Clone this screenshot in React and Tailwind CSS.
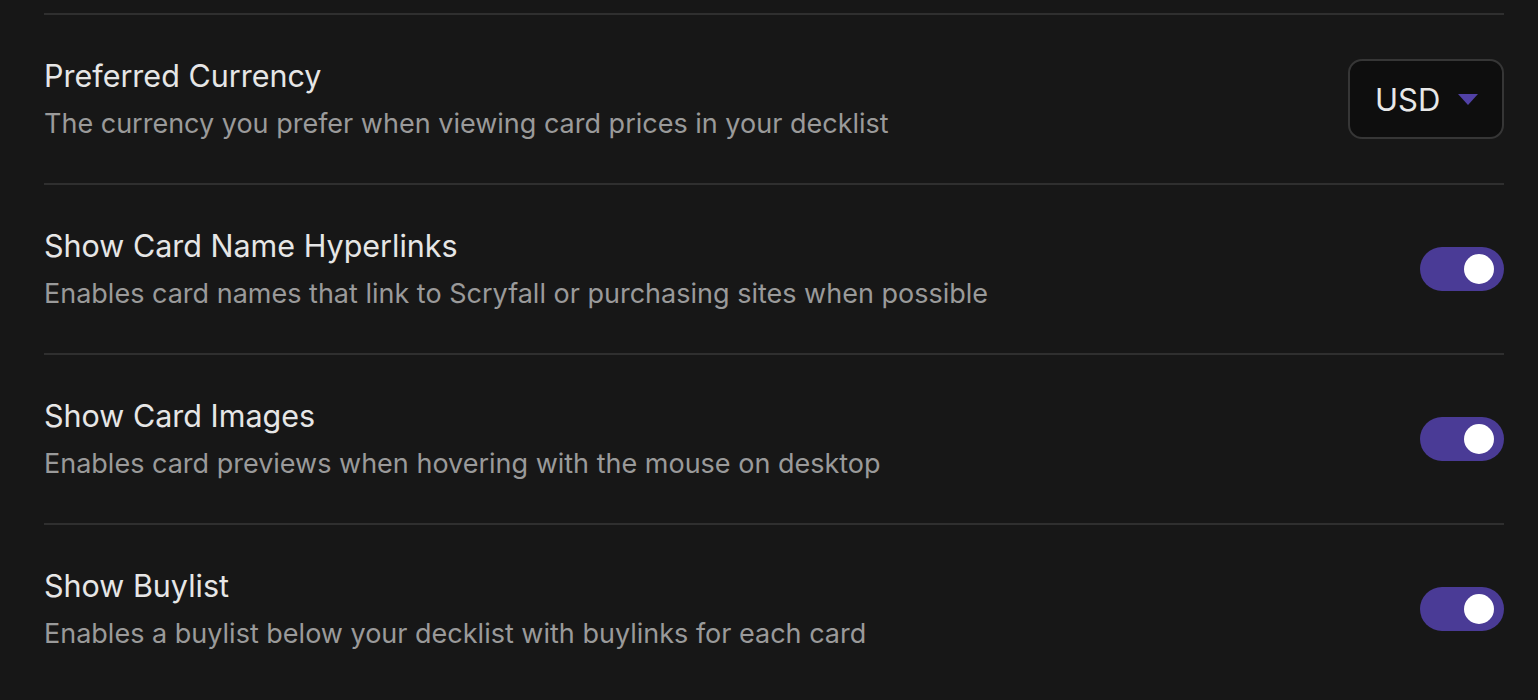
import React, { useState } from 'react';

const rows = [
  {
    key: 'currency',
    title: 'Preferred Currency',
    description: 'The currency you prefer when viewing card prices in your decklist',
    type: 'select',
  },
  {
    key: 'hyperlinks',
    title: 'Show Card Name Hyperlinks',
    description: 'Enables card names that link to Scryfall or purchasing sites when possible',
    type: 'toggle',
  },
  {
    key: 'images',
    title: 'Show Card Images',
    description: 'Enables card previews when hovering with the mouse on desktop',
    type: 'toggle',
  },
  {
    key: 'buylist',
    title: 'Show Buylist',
    description: 'Enables a buylist below your decklist with buylinks for each card',
    type: 'toggle',
  },
];

function Toggle({ on, onChange }) {
  return (
    <button
      onClick={() => onChange(!on)}
      className={`w-[84px] h-[44px] rounded-full flex items-center px-[10px] transition-colors ${
        on ? 'bg-[#4a3b96] justify-end' : 'bg-[#3a3a3a] justify-start'
      }`}
    >
      <span className="w-[30px] h-[30px] rounded-full bg-white block" />
    </button>
  );
}

function CurrencySelect() {
  return (
    <div className="w-[156px] h-[80px] rounded-[14px] border-2 border-[#363636] bg-[#0e0e0e] flex items-center pl-[25px] gap-[18px]">
      <span className="text-[31px] text-[#e8e8e8] leading-none">USD</span>
      <svg width="20" height="11" viewBox="0 0 20 11">
        <polygon points="0,0 20,0 10,11" fill="#5141a6" />
      </svg>
    </div>
  );
}

export default function App() {
  const [toggles, setToggles] = useState({ hyperlinks: true, images: true, buylist: true });

  return (
    <div
      className="min-h-screen bg-[#171717] pt-[13px] pl-[44px] pr-[34px]"
      style={{ fontFamily: 'Inter, "Noto Sans", sans-serif' }}
    >
      {rows.map((row) => (
        <div key={row.key} className="border-t-2 border-[#2f2f2f] h-[170px] flex items-center justify-between">
          <div className="flex flex-col">
            <h3 className="text-[30.5px] leading-[40px] text-[#e6e6e6] font-normal">{row.title}</h3>
            <p className="mt-[10px] text-[27px] leading-[36px] text-[#9a9a9a]">{row.description}</p>
          </div>
          {row.type === 'select' ? (
            <CurrencySelect />
          ) : (
            <Toggle
              on={toggles[row.key]}
              onChange={(v) => setToggles({ ...toggles, [row.key]: v })}
            />
          )}
        </div>
      ))}
    </div>
  );
}
